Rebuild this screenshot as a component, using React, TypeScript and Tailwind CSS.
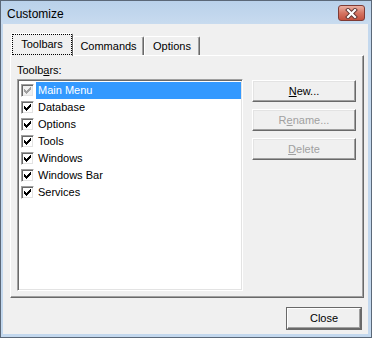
import React from "react";

const toolbars = [
  { name: "Main Menu", disabled: true, selected: true },
  { name: "Database" },
  { name: "Options" },
  { name: "Tools" },
  { name: "Windows" },
  { name: "Windows Bar" },
  { name: "Services" },
];

function Check({ disabled }: { disabled?: boolean }) {
  const tops = [5, 6, 7, 6, 5, 4, 3];
  return (
    <div
      className={`h-[13px] w-[13px] shrink-0 border border-t-[#a0a0a0] border-l-[#a0a0a0] border-r-white border-b-white shadow-[inset_1px_1px_0_#696969,inset_-1px_-1px_0_#e3e3e3] ${
        disabled ? "bg-[#f0f0f0]" : "bg-white"
      }`}
    >
      <svg width="11" height="11" viewBox="1 1 11 11" shapeRendering="crispEdges">
        {tops.map((t, i) => (
          <rect
            key={i}
            x={3 + i}
            y={t}
            width="1"
            height="3"
            fill={disabled ? "#a0a0a0" : "#000"}
          />
        ))}
      </svg>
    </div>
  );
}

function Btn({
  children,
  disabled,
}: {
  children: React.ReactNode;
  disabled?: boolean;
}) {
  return (
    <div
      className={`flex h-[22px] w-[104px] items-center justify-center border border-t-white border-l-white border-r-[#696969] border-b-[#696969] bg-[#f0f0f0] shadow-[inset_-1px_-1px_0_#a0a0a0,inset_1px_1px_0_#e3e3e3] ${
        disabled ? "text-[#a0a0a0]" : "text-black"
      }`}
    >
      {children}
    </div>
  );
}

export default function App() {
  return (
    <div className="flex h-[338px] w-[372px] flex-col border border-[#5b6878] bg-[#c3d8ee] font-['Liberation_Sans',Arial,sans-serif] text-[11px] leading-[13px] text-black">
      {/* title bar */}
      <div className="flex h-[23px] items-start justify-between bg-gradient-to-b from-[#b9d1ea] to-[#c8dbef] pl-[6px] pr-[6px]">
        <span className="mt-[6px] text-[12px] leading-[15px]">Customize</span>
        <div className="mt-[4px] flex h-[16px] w-[27px] items-center justify-center rounded-[3px] border border-[#7e3b35] bg-gradient-to-b from-[#eab0a3] via-[#d57563] to-[#c4513f]">
          <svg width="13" height="11" viewBox="0 0 13 11">
            <path d="M3 2 L10 9 M10 2 L3 9" stroke="#5d3330" strokeWidth="4" strokeLinecap="square" />
            <path d="M3 2 L10 9 M10 2 L3 9" stroke="#fff" strokeWidth="2.2" strokeLinecap="square" />
          </svg>
        </div>
      </div>

      {/* client area */}
      <div className="mb-[3px] ml-[2px] mr-[3px] flex flex-1 flex-col bg-[#f0f0f0]">
        <div className="relative z-10 ml-[8px] mt-[9px] flex h-[23px] items-end">
          <div className="h-[23px] w-[62px] rounded-t-[2px] border-l border-t border-r border-l-white border-t-white border-r-[#696969] bg-[#f0f0f0]">
            <div className="flex h-[21px] items-center justify-center border border-dotted border-black">
              Toolbars
            </div>
          </div>
          <div className="mb-[1px] flex h-[19px] w-[71px] items-center justify-center rounded-t-[2px] border-l border-t border-r border-l-white border-t-white border-r-[#696969] shadow-[inset_-1px_0_0_#a0a0a0]">
            Commands
          </div>
          <div className="mb-[1px] flex h-[19px] w-[56px] items-center justify-center rounded-t-[2px] border-l border-t border-r border-l-white border-t-white border-r-[#696969] shadow-[inset_-1px_0_0_#a0a0a0]">
            Options
          </div>
        </div>

        <div className="-mt-[1px] ml-[7px] flex h-[243px] w-[354px] items-start border border-t-white border-l-white border-r-[#696969] border-b-[#696969] shadow-[inset_-1px_-1px_0_#a0a0a0]">
          <div className="flex flex-col pl-[6px] pt-[8px]">
            <div className="h-[13px]">
              Toolb<span className="underline">a</span>rs:
            </div>
            <div className="mt-[2px] h-[212px] w-[226px] border border-t-[#a0a0a0] border-l-[#a0a0a0] border-r-white border-b-white bg-white p-[1px] pt-[2px] shadow-[inset_1px_1px_0_#696969,inset_-1px_-1px_0_#e3e3e3]">
              {toolbars.map((t) => (
                <div key={t.name} className="flex h-[17px] items-center pl-[2px]">
                  <Check disabled={t.disabled} />
                  <div
                    className={`ml-[2px] flex h-full flex-1 items-center pl-[2px] ${
                      t.selected ? "bg-[#3399ff] text-white" : ""
                    }`}
                  >
                    {t.name}
                  </div>
                </div>
              ))}
            </div>
          </div>
          <div className="ml-[9px] flex flex-col gap-[7px] pt-[24px]">
            <Btn>
              <span>
                <span className="underline">N</span>ew...
              </span>
            </Btn>
            <Btn disabled>
              <span>
                R<span className="underline">e</span>name...
              </span>
            </Btn>
            <Btn disabled>
              <span>
                <span className="underline">D</span>elete
              </span>
            </Btn>
          </div>
        </div>

        <div className="mr-[6px] mt-[9px] self-end border border-[#696969]">
          <div className="flex h-[21px] w-[74px] items-center justify-center border border-t-white border-l-white border-r-[#696969] border-b-[#696969] bg-[#f0f0f0] shadow-[inset_-1px_-1px_0_#a0a0a0]">
            Close
          </div>
        </div>
      </div>
    </div>
  );
}
